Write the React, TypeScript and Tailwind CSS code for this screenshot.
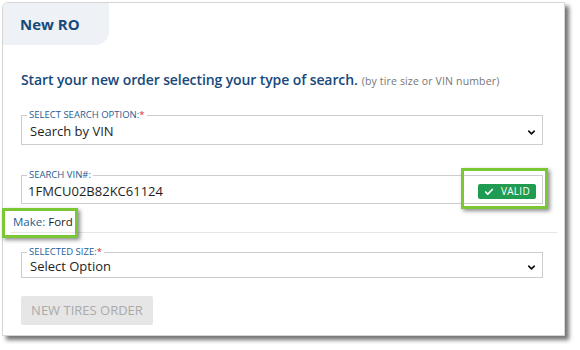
import React from 'react';
import { ChevronDown, Check } from 'lucide-react';

function Field({
  label,
  required,
  bodyH,
  children,
}: {
  label: string;
  required?: boolean;
  bodyH: string;
  children: React.ReactNode;
}) {
  return (
    <div className="ml-[18px] mr-[21px]">
      {/* top border with legend */}
      <div className="flex h-[10px]">
        <div className="w-[6px] mt-[5px] border-t border-l border-[#cdcdcd]" />
        <div className="px-[2px] text-[9.5px] leading-[10px] text-[#1f5d93]">
          {label}
          {required && <span className="text-[#e0261e]">*</span>}
        </div>
        <div className="flex-1 mt-[5px] border-t border-r border-[#cdcdcd]" />
      </div>
      <div className={`${bodyH} border-l border-r border-b border-[#cdcdcd] pl-[8px] pr-[5px] flex items-center justify-between text-[13px] text-[#1e1e1e]`}>
        {children}
      </div>
    </div>
  );
}

export default function App() {
  return (
    <div className="w-[580px] h-[350px] bg-white pt-[2px] pl-[2px]" style={{ fontFamily: '"Open Sans", "Liberation Sans", sans-serif' }}>
      <div className="relative w-[563px] h-[334px] bg-white border border-[#d6d6d6] rounded-tl-[6px] shadow-[4px_4px_4px_rgba(0,0,0,0.55)]">
        {/* Tab */}
        <div className="w-[106px] h-[42px] bg-[#eef2f7] rounded-tl-[6px] rounded-br-[14px] flex items-center pl-[17px]">
          <span className="text-[15px] font-bold text-[#17497a]">New RO</span>
        </div>

        {/* Heading */}
        <div className="mt-[25px] ml-[18px] h-[20px] flex items-baseline gap-[4px]">
          <h1 className="text-[14px] leading-[20px] font-semibold text-[#17497a] tracking-[-0.1px]">Start your new order selecting your type of search.</h1>
          <span className="text-[10.5px] text-[#777] tracking-[0.15px]">(by tire size or VIN number)</span>
        </div>

        <div className="mt-[20px]">
          <Field label="SELECT SEARCH OPTION:" required bodyH="h-[25px]">
            <span>Search by VIN</span>
            <ChevronDown size={11} strokeWidth={3.5} className="text-[#111]" />
          </Field>
        </div>

        <div className="mt-[25px]">
          <Field label="SEARCH VIN#:" bodyH="h-[24px]">
            <span className="ml-[-2px]">1FMCU02B82KC61124</span>
            <span className="mr-[1px] h-[15px] w-[58px] justify-center rounded-[2px] bg-[#1f9c52] text-white text-[10px] tracking-[0.3px] flex items-center gap-[7px]">
              <Check size={10} strokeWidth={4} />
              VALID
            </span>
          </Field>
        </div>

        <div className="mt-[9px] ml-[10px] h-[18px] flex items-center text-[11.5px]">
          <span className="text-[#1f5d93]">Make:</span>
          <span className="ml-[3px] text-[#222]">Ford</span>
        </div>
        <div className="mt-[1px] mx-[7px] border-t border-[#e6e6e6]" />

        <div className="mt-[14px]">
          <Field label="SELECTED SIZE:" required bodyH="h-[21px]">
            <span>Select Option</span>
            <ChevronDown size={11} strokeWidth={3.5} className="text-[#111]" />
          </Field>
        </div>

        <button className="mt-[18px] ml-[18px] w-[132px] h-[29px] bg-[#e6e6e6] text-[#aaaaaa] text-[13px] rounded-[2px]">
          NEW TIRES ORDER
        </button>

        {/* Highlight callouts */}
        <div className="absolute left-[458px] top-[165px] w-[87px] h-[41px] border-[3px] border-[#7cc734] shadow-[2px_2px_4px_rgba(0,0,0,0.45)]" />
        <div className="absolute left-[-1px] top-[205px] w-[76px] h-[30px] border-[3px] border-[#7cc734] shadow-[2px_2px_4px_rgba(0,0,0,0.45)]" />
      </div>
    </div>
  );
}
